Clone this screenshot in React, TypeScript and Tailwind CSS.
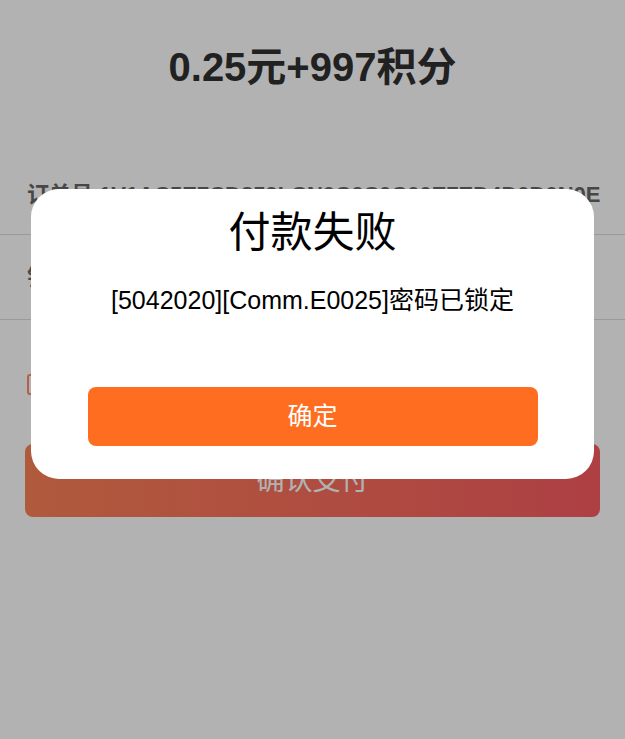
import React from 'react'

const font = { fontFamily: '"Liberation Sans", "Noto Sans CJK SC", sans-serif' }

const ErrorDialog: React.FC<{ title: string; message: string; onConfirm?: () => void }> = ({
  title,
  message,
  onConfirm,
}) => (
  <div className="fixed inset-0 bg-black/30 flex justify-center pt-[189px]">
    <div className="w-[563px] h-[290px] bg-white rounded-[28px] flex flex-col items-center pt-[16px] pb-[33px]">
      <h2 className="text-[42px] leading-[56px] text-black">{title}</h2>
      <p className="mt-[21px] text-[25px] leading-[36px] text-black">{message}</p>
      <button
        className="mt-[69px] w-[450px] h-[59px] rounded-lg bg-[#ff6d20] text-white text-[25px]"
        onClick={onConfirm}>
        确定
      </button>
    </div>
  </div>
)

export default function App() {
  return (
    <div className="min-h-[739px] bg-white" style={font}>
      <div className="pt-[40px] pb-[61px] text-center">
        <h1 className="text-[40px] leading-[54px] font-bold text-[#303030]">0.25元+997积分</h1>
      </div>
      <div className="h-[80px] px-[27px] flex items-center border-b border-[#dddddd]">
        <span className="text-[22px] font-bold text-[#666666] whitespace-nowrap">
          订单号 1V1AC5E7CD259LCN0C6C0C00E7ED4D0D0N0E
        </span>
      </div>
      <div className="h-[85px] px-[27px] flex items-center border-b border-[#dddddd]">
        <span className="text-[22px] font-bold text-[#666666]">钱包支付</span>
      </div>
      <div className="pt-[51px] px-[27px] flex items-center gap-2">
        <span className="w-[21px] h-[21px] rounded-[3px] border-2 border-[#ff8a6a] bg-white" />
        <span className="text-[18px] text-[#666666]">我已阅读并同意支付协议</span>
      </div>
      <div className="px-[25px] mt-[46px]">
        <button className="w-full h-[73px] rounded-lg bg-gradient-to-r from-[#fd8157] to-[#f95b61] text-white text-[28px]">
          确认支付
        </button>
      </div>
      <ErrorDialog title="付款失败" message="[5042020][Comm.E0025]密码已锁定" />
    </div>
  )
}
